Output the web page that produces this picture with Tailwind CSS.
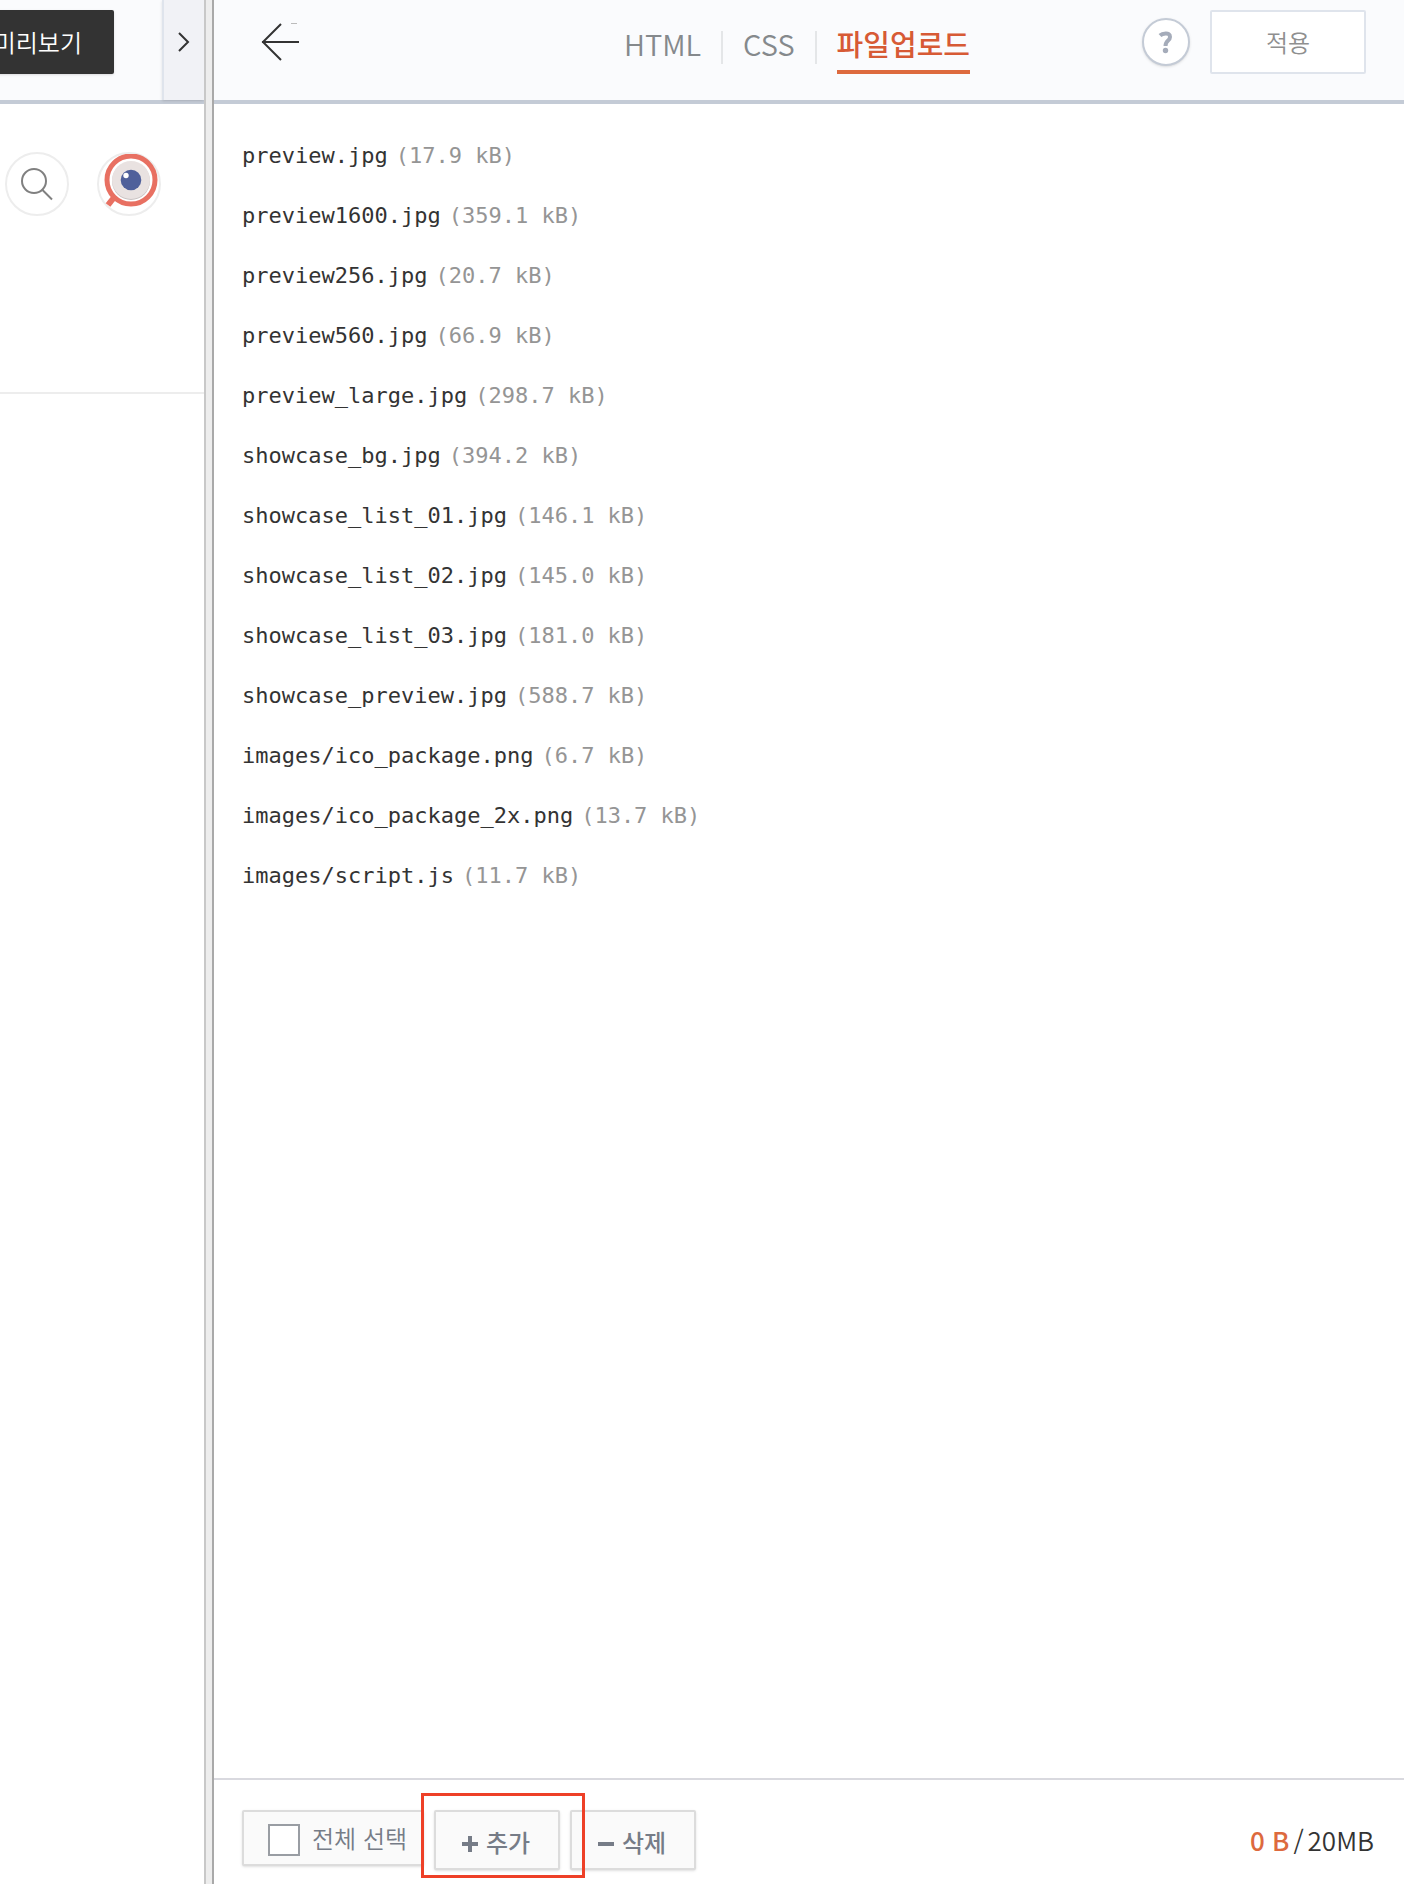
<!DOCTYPE html>
<html lang="ko">
<head>
    <meta charset="utf-8">
    <meta name="viewport" content="width=device-width, initial-scale=1">
    <title>파일업로드</title>
    <script src="https://cdn.jsdelivr.net/npm/@tailwindcss/browser@4"></script>
</head>
<body class="flex min-h-screen bg-white font-['Noto_Sans_CJK_KR',sans-serif] text-2xl text-[#333]">
    <!-- preview pane -->
    <aside class="flex w-[204px] shrink-0 flex-col overflow-hidden">
        <div class="flex h-[104px] justify-between border-b-4 border-[#c4cbd6] bg-[#fafbfd]">
            <div class="flex w-[114px] justify-end pt-[10px]">
                <button type="button" class="h-16 w-[160px] shrink-0 rounded-xs bg-[#333] pr-8 text-right font-[350] text-white shadow">미리보기</button>
            </div>
            <button type="button" aria-label="다음" class="flex h-[100px] w-[42px] items-center border-l-2 border-[#dfe4ec] bg-[#f1f2f6] pb-4 pl-3 shadow-sm">
                <svg class="h-6 w-5" viewBox="0 0 20 24" fill="none" stroke="#333" stroke-width="2"><path d="M3 3 12 12 3 21"/></svg>
            </button>
        </div>
        <div class="flex h-[290px] gap-7 border-b-2 border-[#ededed] pt-12 pl-[5px]">
            <button type="button" aria-label="검색" class="size-16 rounded-full border-2 border-[#ededed]">
                <svg class="size-[60px]" viewBox="0 0 60 60" fill="none" stroke="#808080" stroke-width="2"><circle cx="27" cy="27" r="12"/><path d="M35.500 36 45 45.500"/></svg>
            </button>
            <a href="#" aria-label="블로그" class="size-16 rounded-full border-2 border-[#ededed]">
                <svg class="size-[60px]" viewBox="0 0 60 60">
                    <path d="M17 41 9 51" stroke="#e87062" stroke-width="6"/>
                    <circle cx="32" cy="26" r="24" fill="#fff" stroke="#e87062" stroke-width="5"/>
                    <circle cx="32" cy="27" r="19" fill="#c9c3c3"/>
                    <circle cx="32" cy="26" r="19" fill="#e9e2e1"/>
                    <circle cx="32" cy="26" r="10.300" fill="#4f609b"/>
                    <circle cx="27" cy="21.500" r="2.700" fill="#fff"/>
                </svg>
            </a>
        </div>
    </aside>

    <!-- splitter -->
    <div class="w-[10px] shrink-0 border-r-2 border-l-2 border-r-[#a9a9a9] border-l-[#c8c8c8] bg-[#ededed]"></div>

    <!-- editor pane -->
    <main class="flex min-w-0 flex-1 flex-col">
        <header class="flex h-[104px] items-start border-b-4 border-[#c4cbd6] bg-[#fafbfd] pr-[38px] pl-[46px]">
            <button type="button" aria-label="뒤로" class="mt-[22px]">
                <svg class="h-10 w-[40px]" viewBox="0 0 40 40" fill="none" stroke="#333" stroke-width="2"><path d="M21 2 3 20 21 38M2 20H39"/><path d="M31 1.500H37" stroke="#bbb" stroke-width="1"/></svg>
            </button>
            <nav class="mr-[172px] ml-auto flex pt-[22px] text-[29px] leading-[42px] text-[#85898c]">
                <a href="#" class="font-[350]">HTML</a>
                <span class="mx-5 mt-[9px] h-[33px] w-[2px] bg-[#e4e6e8]"></span>
                <a href="#" class="font-[350]">CSS</a>
                <span class="mx-5 mt-[9px] h-[33px] w-[2px] bg-[#e4e6e8]"></span>
                <a href="#" class="border-b-4 border-[#dd6a3e] pb-[6px] font-medium text-[#d75a35]">파일업로드</a>
            </nav>
            <button type="button" aria-label="도움말" class="mt-[18px] flex size-12 items-center justify-center rounded-full border-2 border-[#c4cbd6] bg-white shadow-sm">
                <svg class="h-6 w-4" viewBox="0 0 16 24" fill="none" stroke="#a5acba" stroke-width="4"><path d="M2 5.500C4 3.500 12 1.500 12 7 12 11 7.500 10 7.500 16"/><circle cx="7.500" cy="20.500" r="2.700" fill="#a5acba" stroke="none"/></svg>
            </button>
            <button type="button" class="mt-[10px] ml-5 h-16 w-[156px] rounded-xs border-2 border-[#dfe4ec] bg-white font-[350] text-[#8f8f8f]">적용</button>
        </header>

        <ul class="flex-1 pt-[22px] pl-7 font-['DejaVu_Sans_Mono',monospace] text-[22px] leading-[60px]">
            <li class="flex gap-2"><span>preview.jpg</span><span class="text-[#959595]">(17.9 kB)</span></li>
            <li class="flex gap-2"><span>preview1600.jpg</span><span class="text-[#959595]">(359.1 kB)</span></li>
            <li class="flex gap-2"><span>preview256.jpg</span><span class="text-[#959595]">(20.7 kB)</span></li>
            <li class="flex gap-2"><span>preview560.jpg</span><span class="text-[#959595]">(66.9 kB)</span></li>
            <li class="flex gap-2"><span>preview_large.jpg</span><span class="text-[#959595]">(298.7 kB)</span></li>
            <li class="flex gap-2"><span>showcase_bg.jpg</span><span class="text-[#959595]">(394.2 kB)</span></li>
            <li class="flex gap-2"><span>showcase_list_01.jpg</span><span class="text-[#959595]">(146.1 kB)</span></li>
            <li class="flex gap-2"><span>showcase_list_02.jpg</span><span class="text-[#959595]">(145.0 kB)</span></li>
            <li class="flex gap-2"><span>showcase_list_03.jpg</span><span class="text-[#959595]">(181.0 kB)</span></li>
            <li class="flex gap-2"><span>showcase_preview.jpg</span><span class="text-[#959595]">(588.7 kB)</span></li>
            <li class="flex gap-2"><span>images/ico_package.png</span><span class="text-[#959595]">(6.7 kB)</span></li>
            <li class="flex gap-2"><span>images/ico_package_2x.png</span><span class="text-[#959595]">(13.7 kB)</span></li>
            <li class="flex gap-2"><span>images/script.js</span><span class="text-[#959595]">(11.7 kB)</span></li>
        </ul>

        <footer class="flex h-[106px] items-start gap-[10px] border-t-2 border-[#d9d9df] pt-[30px] pr-[30px] pl-7 text-[#767c87]">
            <label class="flex h-14 w-[182px] items-center gap-3 rounded-xs border-2 border-[#dcdcdc] bg-[#fafafa] pl-6 font-[350] shadow-sm">
                <input type="checkbox" class="mt-1 size-8 appearance-none border-2 border-[#999da3] bg-white">
                <span>전체 선택</span>
            </label>
            <div class="relative">
                <button type="button" class="flex h-[60px] w-[126px] items-center gap-2 rounded-xs border-2 border-[#dcdcdc] bg-[#fafafa] pt-1 pl-[26px] font-medium shadow-sm">
                    <svg class="mt-1 size-4" viewBox="0 0 16 16" stroke="#767c87" stroke-width="4"><path d="M0 8H16M8 0V16"/></svg>추가
                </button>
                <!-- highlight around the add button -->
                <div class="pointer-events-none absolute -top-[17px] -right-[25px] -bottom-2 -left-[13px] z-10 border-3 border-[#ee4027]"></div>
            </div>
            <button type="button" class="flex h-[60px] w-[126px] items-center gap-2 rounded-xs border-2 border-[#dcdcdc] bg-[#fafafa] pt-1 pl-[26px] font-medium shadow-sm">
                <svg class="mt-1 size-4" viewBox="0 0 16 16" stroke="#767c87" stroke-width="4"><path d="M0 8H16"/></svg>삭제
            </button>
            <p class="ml-auto flex gap-1 pt-[10px] text-[26px] leading-[40px] font-[350] text-[#333]"><span class="font-medium text-[#dd6a3e]">0 B</span><span>/</span><span>20MB</span></p>
        </footer>
    </main>
</body>
</html>
